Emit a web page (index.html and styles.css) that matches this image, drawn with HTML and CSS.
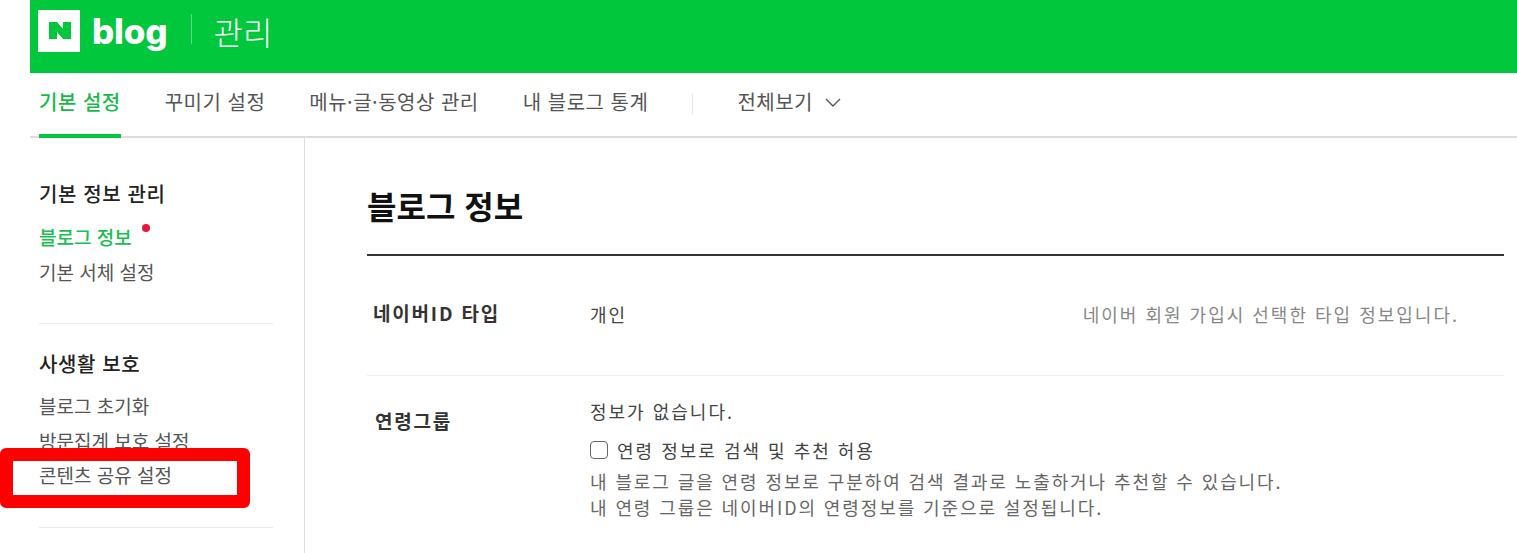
FILE: index.html
```html
<!DOCTYPE html>
<html lang="ko">
<head>
<meta charset="utf-8">
<title>블로그 정보</title>
<link rel="stylesheet" href="styles.css">
</head>
<body>
<div class="page">
  <header class="top">
    <svg class="logo-n" width="42" height="42" viewBox="0 0 42 42"><rect width="42" height="42" fill="#fff"/><path d="M11 12h8l6 7v-7h8v17h-8l-6-7v7h-8z" fill="#00c73c"/></svg>
    <span class="logo-word">blog</span>
    <span class="top-sep"></span>
    <span class="top-title">관리</span>
  </header>
  <nav class="tabs">
    <a class="tab active">기본 설정</a>
    <a class="tab">꾸미기 설정</a>
    <a class="tab">메뉴·글·동영상 관리</a>
    <a class="tab">내 블로그 통계</a>
    <span class="tab-sep"></span>
    <a class="tab">전체보기
      <svg class="chev" width="16" height="10" viewBox="0 0 16 10"><path d="M1 1l7 7 7-7" fill="none" stroke="#555" stroke-width="1.4"/></svg>
    </a>
  </nav>
  <div class="body">
    <aside class="side">
      <section class="group">
        <h3 class="group-title">기본 정보 관리</h3>
        <a class="item current">블로그 정보<span class="dot"></span></a>
        <a class="item">기본 서체 설정</a>
      </section>
      <section class="group second">
        <h3 class="group-title">사생활 보호</h3>
        <a class="item">블로그 초기화</a>
        <a class="item">방문집계 보호 설정</a>
        <a class="item">콘텐츠 공유 설정</a>
      </section>
    </aside>
    <main class="main">
      <h1 class="title">블로그 정보</h1>
      <div class="row first">
        <div class="label">네이버ID 타입</div>
        <div class="value">개인</div>
        <div class="hint">네이버 회원 가입시 선택한 타입 정보입니다.</div>
      </div>
      <div class="row second-row">
        <div class="label">연령그룹</div>
        <div class="value stack">
          <div class="line">정보가 없습니다.</div>
          <label class="check"><span class="box"></span>연령 정보로 검색 및 추천 허용</label>
          <div class="desc">내 블로그 글을 연령 정보로 구분하여 검색 결과로 노출하거나 추천할 수 있습니다.</div>
          <div class="desc">내 연령 그룹은 네이버ID의 연령정보를 기준으로 설정됩니다.</div>
        </div>
      </div>
    </main>
  </div>
  <div class="annot"></div>
</div>
</body>
</html>
```
FILE: styles.css
```css
* { box-sizing: border-box; }
html, body { margin: 0; padding: 0; background: #fff; overflow: hidden; }
body { font-family: "Noto Sans CJK KR", "Noto Sans", sans-serif; color: #444; height: 553px; }
.page { position: relative; padding-left: 30px; height: 553px; overflow: hidden; }
.top { height: 73px; background: #00c73c; display: flex; align-items: center; padding-left: 8px; color: #fff; }
.logo-n { margin-top: -11px; flex: none; }
.logo-word { font-family: "Inter", sans-serif; font-weight: 800; font-size: 35px; margin-left: 12px; margin-top: -11px; letter-spacing: -0.2px; line-height: 42px; }
.top-sep { width: 1px; height: 30px; background: #5fd985; margin: -15px 0 0 24px; }
.top-title { font-size: 32px; font-weight: 300; margin-left: 21px; margin-top: -11px; line-height: 42px; }
.tabs { height: 65px; border-bottom: 2px solid #ddd; display: flex; align-items: stretch; padding-left: 9px; }
.tab { font-size: 20px; color: #555; display: flex; align-items: center; padding-bottom: 4px; margin-right: 44px; border-bottom: 4px solid transparent; margin-bottom: -2px; white-space: nowrap; letter-spacing: 0.5px; }
.tab.active { color: #19b84a; font-weight: 500; border-bottom-color: #00c73c; }
.tab-sep { width: 1px; height: 20px; background: #e4e4e4; align-self: center; margin-right: 44px; margin-top: -2px; }
.chev { margin-left: 12px; margin-top: 3px; }
.body { display: flex; height: 415px; }
.side { width: 275px; flex: none; border-right: 1px solid #ddd; padding: 42px 31px 0 9px; }
.group { border-bottom: 1px solid #e9e9e9; height: 144px; }
.group.second { padding-top: 26px; height: 204px; }
.group-title { margin: 0 0 12px; font-size: 20px; line-height: 28px; font-weight: 500; color: #222; letter-spacing: 0.6px; }
.second .group-title { margin-bottom: 11px; }
.item { display: block; font-size: 19px; line-height: 34.5px; color: #555; white-space: nowrap; }
.item.current { color: #19c050; font-weight: 500; position: relative; width: max-content; }
.dot { position: absolute; top: 4px; right: -18px; width: 8px; height: 8px; border-radius: 50%; background: #e8173c; }
.main { flex: 1; padding: 0 13px 0 62px; min-width: 0; }
.title { margin: 0; height: 118px; padding-top: 44px; border-bottom: 2px solid #333; font-size: 32px; line-height: 46px; font-weight: 700; color: #111; }
.row { display: flex; padding-left: 6px; }
.row.first { height: 120px; border-bottom: 1px solid #eee; padding-top: 44px; }
.row.second-row { padding-top: 21px; }
.label { width: 217px; flex: none; font-size: 19px; line-height: 28px; font-weight: 700; color: #333; letter-spacing: 1.8px; }
.first .label { margin-top: -1px; }
.second-row .label { padding: 10px 0 0 2px; }
.value { font-size: 18px; line-height: 28px; color: #444; letter-spacing: 2px; }
.hint { margin-left: auto; margin-right: 45px; font-size: 18px; line-height: 28px; color: #888; letter-spacing: 2px; }
.stack { display: flex; flex-direction: column; }
.line { height: 38px; }
.check { display: flex; align-items: center; height: 30px; letter-spacing: 2px; }
.box { width: 18px; height: 18px; border: 1.5px solid #666; border-radius: 4px; margin-right: 9px; flex: none; }
.desc { font-size: 18px; line-height: 25.5px; color: #666; letter-spacing: 1.9px; white-space: nowrap; }
.check + .desc { margin-top: 4px; }
.annot { position: absolute; left: 0; top: 448px; width: 250px; height: 60px; border: 13px solid #f00; border-radius: 6px; }
```
